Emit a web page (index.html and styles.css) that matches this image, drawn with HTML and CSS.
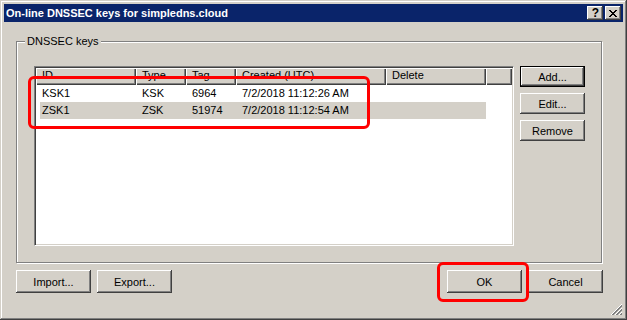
FILE: index.html
```html
<!DOCTYPE html>
<html lang="en">
<head>
    <meta charset="UTF-8">
    <title>On-line DNSSEC keys for simpledns.cloud</title>
    <link rel="stylesheet" href="styles.css">
</head>
<body>
    <div class="window">
        <div class="titlebar">
            <span class="title">On-line DNSSEC keys for simpledns.cloud</span>
            <div class="caption-buttons">
                <button class="cap-btn help">?</button>
                <button class="cap-btn close">
                    <svg width="8" height="7" viewBox="0 0 8 7" shape-rendering="crispEdges">
                        <path d="M0 0h2v1h-2z M6 0h2v1h-2z M1 1h2v1h-2z M5 1h2v1h-2z M2 2h4v1h-4z M3 3h2v1h-2z M2 4h4v1h-4z M1 5h2v1h-2z M5 5h2v1h-2z M0 6h2v1h-2z M6 6h2v1h-2z" fill="#000"/>
                    </svg>
                </button>
            </div>
        </div>

        <div class="content">
            <div class="group">
                <span class="group-label">DNSSEC keys</span>
                <div class="listview">
                    <div class="lv-header">
                        <div class="col col-id">ID</div>
                        <div class="col col-type">Type</div>
                        <div class="col col-tag">Tag</div>
                        <div class="col col-created">Created (UTC)</div>
                        <div class="col col-delete">Delete</div>
                        <div class="col col-fill"></div>
                    </div>
                    <div class="lv-row">
                        <div class="cell col-id">KSK1</div>
                        <div class="cell col-type">KSK</div>
                        <div class="cell col-tag">6964</div>
                        <div class="cell col-created">7/2/2018 11:12:26 AM</div>
                        <div class="cell col-delete"></div>
                    </div>
                    <div class="lv-row selected">
                        <div class="cell col-id">ZSK1</div>
                        <div class="cell col-type">ZSK</div>
                        <div class="cell col-tag">51974</div>
                        <div class="cell col-created">7/2/2018 11:12:54 AM</div>
                        <div class="cell col-delete"></div>
                    </div>
                </div>
                <div class="side-buttons">
                    <button class="btn small default">Add...</button>
                    <button class="btn small">Edit...</button>
                    <button class="btn small">Remove</button>
                </div>
            </div>

            <div class="bottom-bar">
                <div class="btn-pair">
                    <button class="btn">Import...</button>
                    <button class="btn">Export...</button>
                </div>
                <div class="btn-pair">
                    <button class="btn">OK</button>
                    <button class="btn">Cancel</button>
                </div>
            </div>
        </div>

        <svg class="grip" width="12" height="12" viewBox="0 0 12 12" shape-rendering="crispEdges">
            <path d="M11 0L0 11 M11 4L4 11 M11 8L8 11" stroke="#fff" stroke-width="1"/>
            <path d="M11 1L1 11 M11 2L2 11 M11 5L5 11 M11 6L6 11 M11 9L9 11 M11 10L10 11" stroke="#808080" stroke-width="1"/>
        </svg>

        <!-- red highlight marks -->
        <div class="mark mark-list"></div>
        <div class="mark mark-ok"></div>
    </div>
</body>
</html>
```

FILE: styles.css
```css
body {
    margin: 0;
    font-family: "Liberation Sans", Arial, sans-serif;
    font-size: 11px;
    color: #000;
}
.window {
    position: relative;
    box-sizing: border-box;
    width: 627px;
    height: 320px;
    padding: 4px;
    background: #d4d0c8;
    box-shadow: inset -1px -1px #404040, inset 1px 1px #d4d0c8,
                inset -2px -2px #808080, inset 2px 2px #fff;
}
.titlebar {
    display: flex;
    align-items: center;
    justify-content: space-between;
    height: 18px;
    padding: 0 2px 0 2px;
    background: #0a246a;
}
.title {
    color: #fff;
    font-weight: bold;
    font-size: 11px;
}
.caption-buttons {
    display: flex;
    gap: 2px;
}
.cap-btn {
    display: flex;
    align-items: center;
    justify-content: center;
    box-sizing: border-box;
    width: 16px;
    height: 14px;
    padding: 0;
    border: none;
    background: #d4d0c8;
    box-shadow: inset -1px -1px #404040, inset 1px 1px #fff,
                inset -2px -2px #808080;
}
.cap-btn.help {
    font-family: "Liberation Sans", Arial, sans-serif;
    font-weight: bold;
    font-size: 12px;
    line-height: 14px;
    padding-left: 1px;
}
.content {
    padding: 19px 20px 0 12px;
}
.group {
    position: relative;
    display: flex;
    gap: 6px;
    box-sizing: border-box;
    height: 222px;
    margin-right: 1px;
    padding: 24px 16px 16px 17px;
    border: 1px solid #808080;
    box-shadow: inset 1px 1px #fff, 1px 1px #fff;
}
.group-label {
    position: absolute;
    left: 8px;
    top: -7px;
    padding: 0 2px;
    line-height: 13px;
    background: #d4d0c8;
}
.listview {
    box-sizing: border-box;
    width: 480px;
    height: 180px;
    padding: 1px;
    background: #fff;
    border-style: solid;
    border-width: 1px;
    border-color: #808080 #fff #fff #808080;
    box-shadow: inset 1px 1px #404040, inset -1px -1px #d4d0c8;
}
.lv-header {
    display: flex;
    height: 17px;
}
.col {
    box-sizing: border-box;
    height: 17px;
    padding-left: 6px;
    line-height: 15px;
    white-space: nowrap;
    background: #d4d0c8;
    box-shadow: inset 1px 1px #fff, inset -1px -1px #404040,
                inset -2px -2px #808080;
}
.col-id { width: 100px; }
.col-type { width: 50px; }
.col-tag { width: 50px; }
.col-created { width: 150px; }
.col-delete { width: 100px; }
.col-fill { flex: 1; }
.lv-row {
    display: flex;
    height: 17px;
}
.cell {
    box-sizing: border-box;
    height: 17px;
    padding-left: 6px;
    line-height: 17px;
    white-space: nowrap;
}
.cell.col-id {
    width: 96px;
    margin-left: 4px;
    padding-left: 2px;
}
.lv-row.selected .cell { background: #d4d0c8; }
.side-buttons {
    display: flex;
    flex-direction: column;
    gap: 6px;
}
.btn {
    box-sizing: border-box;
    width: 75px;
    height: 23px;
    padding: 0;
    border: none;
    background: #d4d0c8;
    font-family: "Liberation Sans", Arial, sans-serif;
    font-size: 11px;
    color: #000;
    box-shadow: inset -1px -1px #404040, inset 1px 1px #fff,
                inset -2px -2px #808080;
}
.btn.small {
    width: 65px;
    height: 21px;
}
.btn.default {
    box-shadow: inset 0 0 0 1px #000, inset -2px -2px #404040,
                inset 2px 2px #fff, inset -3px -3px #808080;
}
.bottom-bar {
    display: flex;
    justify-content: space-between;
    margin-top: 7px;
}
.btn-pair {
    display: flex;
    gap: 6px;
}
.grip {
    position: absolute;
    right: 4px;
    bottom: 4px;
}
.mark {
    position: absolute;
    box-sizing: border-box;
    border: 3px solid #f00;
    border-radius: 6px;
}
.mark-list {
    left: 28px;
    top: 76px;
    width: 342px;
    height: 53px;
}
.mark-ok {
    left: 437px;
    top: 262px;
    width: 92px;
    height: 40px;
}
```
